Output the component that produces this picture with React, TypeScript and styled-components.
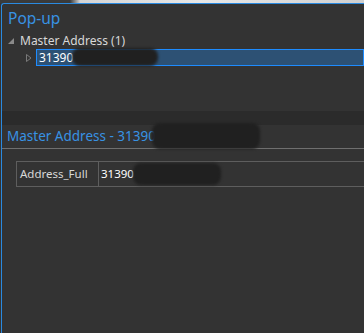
import React from "react";
import styled, { createGlobalStyle } from "styled-components";

const Global = createGlobalStyle`
  html, body { margin: 0; padding: 0; background: #333333; overflow: hidden; }
  * { box-sizing: border-box; }
`;

const Root = styled.div`
  width: 364px;
  height: 333px;
  display: flex;
  flex-direction: column;
  background: #333333;
  font-family: "Noto Sans", "Open Sans", sans-serif;
  overflow: hidden;
`;

const TopStrip = styled.div`
  height: 3px;
  background: linear-gradient(to right, #3a3a3a 0, #3a3a3a 70px, #d4d4d4 80px, #e8e8e8 200px, #d0d0d0 364px);
`;

const Panel = styled.div`
  flex: 1;
  display: flex;
  flex-direction: column;
  margin-left: 1px;
  border-left: 1px solid #2a8ae0;
  border-top: 1px solid #2a8ae0;
  border-top-left-radius: 3px;
  background: #333333;
`;

const Title = styled.div`
  height: 28px;
  padding: 4px 0 0 6px;
  color: #3892e3;
  font-size: 15.5px;
  line-height: 20px;
`;

const TreeRow = styled.div<{ $indent: number }>`
  display: flex;
  align-items: center;
  height: 17px;
  padding-left: ${(p) => p.$indent}px;
  position: relative;
`;

const Arrow = styled.svg`
  width: 8px;
  height: 8px;
  flex: none;
`;

const RowLabel = styled.span`
  color: #d8d8d8;
  font-size: 12px;
  line-height: 16px;
  margin-left: 5px;
`;

const Selected = styled.div`
  flex: 1;
  height: 17px;
  margin-left: 2px;
  border: 1px solid #1e8cff;
  background: #2d5174;
  color: #ffffff;
  font-size: 12px;
  line-height: 15px;
  padding-left: 2px;
  position: relative;
`;

const Blob = styled.div<{ $l: number; $t: number; $w: number; $h: number }>`
  position: absolute;
  left: ${(p) => p.$l}px;
  top: ${(p) => p.$t}px;
  width: ${(p) => p.$w}px;
  height: ${(p) => p.$h}px;
  background: #202020;
  border-radius: 8px;
  filter: blur(1.5px);
`;

const Spacer = styled.div`
  height: 45px;
`;

const Band = styled.div`
  height: 14px;
  background: #2b2b2b;
`;

const DetailHeader = styled.div`
  height: 24px;
  padding-left: 5px;
  color: #3892e3;
  font-size: 13.5px;
  line-height: 22px;
  border-bottom: 1px solid #6f6f6f;
  position: relative;
`;

const Table = styled.div`
  margin: 12px 0 0 14px;
  display: grid;
  grid-template-columns: 82px 1fr;
  height: 26px;
  border: 1px solid #5e5e5e;
  border-right: none;
  position: relative;
`;

const Cell = styled.div<{ $value?: boolean }>`
  padding-left: ${(p) => (p.$value ? 2 : 3)}px;
  color: ${(p) => (p.$value ? "#ffffff" : "#d8d8d8")};
  font-size: 11.5px;
  line-height: 23px;
  border-right: ${(p) => (p.$value ? "none" : "1px solid #5e5e5e")};
  position: relative;
`;

export default function App() {
  return (
    <Root>
      <Global />
      <TopStrip />
      <Panel>
        <Title>Pop-up</Title>
        <TreeRow $indent={5}>
          <Arrow viewBox="0 0 8 8">
            <polygon points="7,1 7,7 1,7" fill="#8a8a8a" />
          </Arrow>
          <RowLabel>Master Address (1)</RowLabel>
        </TreeRow>
        <TreeRow $indent={23}>
          <Arrow viewBox="0 0 8 8" style={{ marginRight: 1 }}>
            <polygon points="1.5,0.5 6,4 1.5,7.5" fill="none" stroke="#7a7a7a" strokeWidth="1" />
          </Arrow>
          <Selected>
            31390
            <Blob $l={35} $t={-2} $w={86} $h={18} />
          </Selected>
        </TreeRow>
        <Spacer />
        <Band />
        <DetailHeader>
          Master Address - 31390
          <Blob $l={150} $t={-2} $w={108} $h={26} />
        </DetailHeader>
        <Table>
          <Cell>Address_Full</Cell>
          <Cell $value>
            31390
            <Blob $l={34} $t={1} $w={88} $h={22} />
          </Cell>
        </Table>
      </Panel>
    </Root>
  );
}
